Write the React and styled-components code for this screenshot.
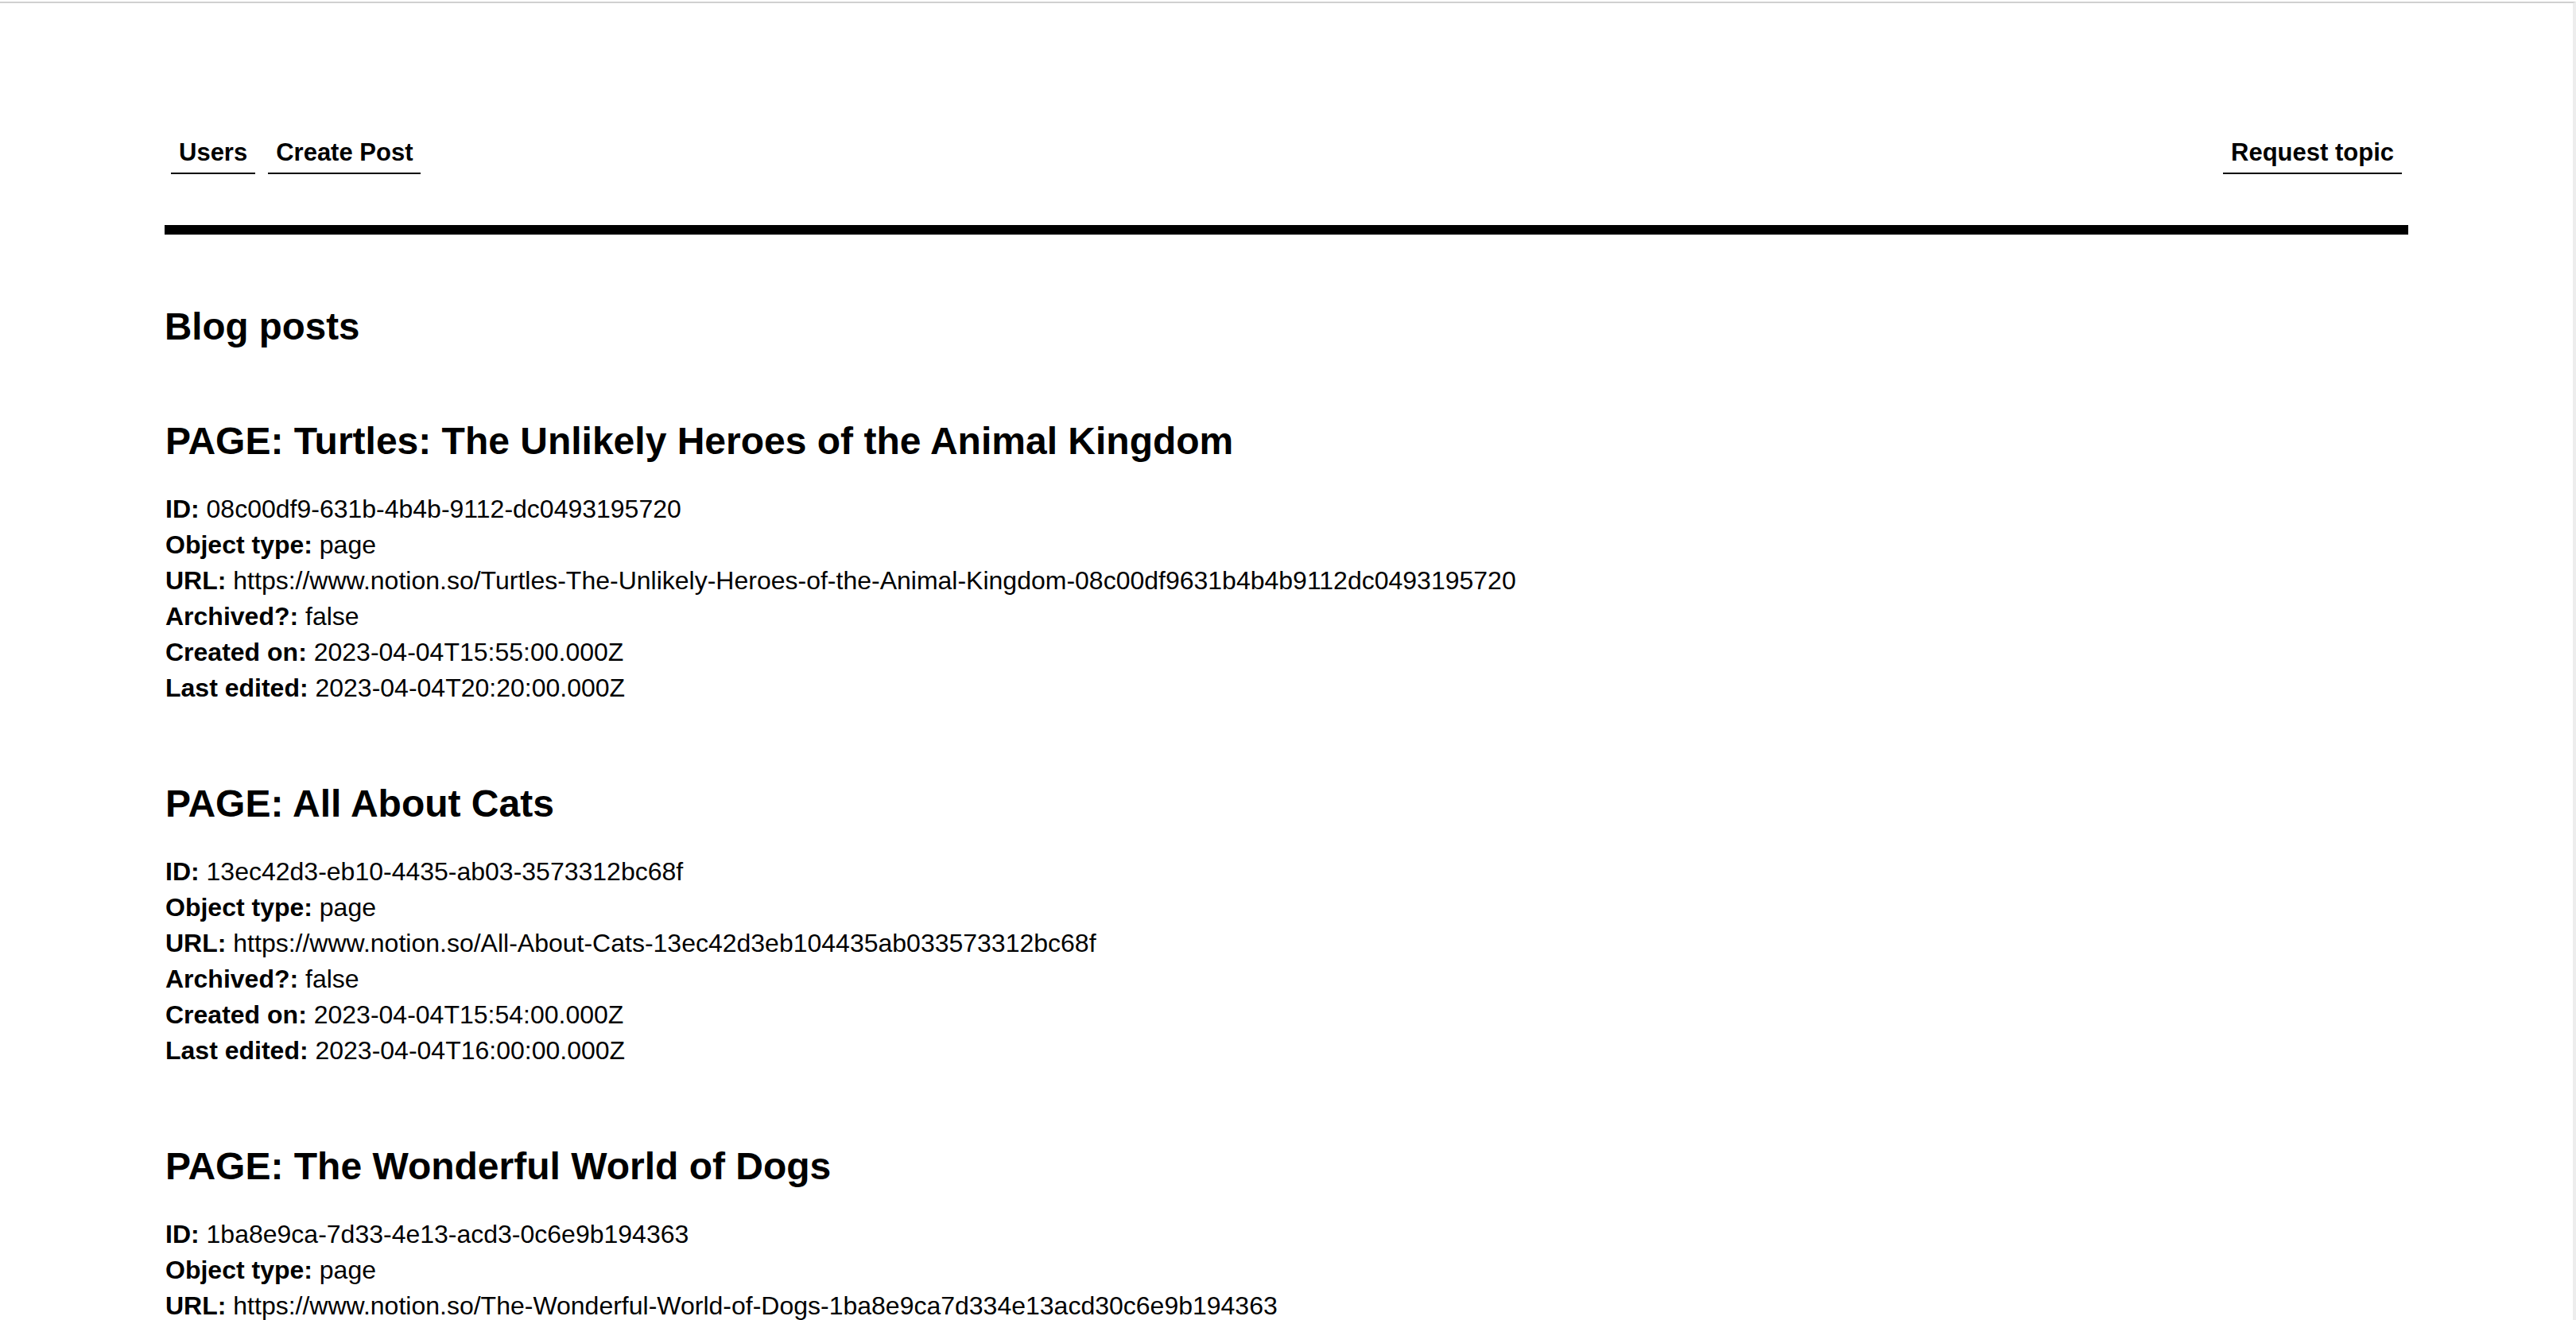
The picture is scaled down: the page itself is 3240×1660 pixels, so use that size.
import React from 'react';
import styled, { createGlobalStyle } from 'styled-components';

const GlobalStyle = createGlobalStyle`
  html, body {
    margin: 0;
    padding: 0;
    background: #ffffff;
  }
  body {
    font-family: "Liberation Sans", Arial, Helvetica, sans-serif;
    color: #000000;
  }
`

const Frame = styled.div`
  margin-top: 2px;
  border-top: 2px solid #d0d0d0;
  border-right: 4px solid #ededed;
  min-height: 100vh;
  box-sizing: border-box;
`

const Container = styled.div`
  width: 2822px;
  margin: 0 auto;
`

const Nav = styled.nav`
  display: flex;
  justify-content: space-between;
  align-items: flex-end;
  margin-top: 170px;
  padding: 0 8px;
`

const NavGroup = styled.div`
  display: flex;
  gap: 16px;
`

const NavLink = styled.a`
  display: block;
  font-size: 31px;
  font-weight: bold;
  line-height: 36px;
  color: #000000;
  text-decoration: none;
  padding: 0 10px 7px;
  border-bottom: 2px solid #000000;
  cursor: pointer;
`

const Rule = styled.hr`
  height: 12px;
  margin: 64px 0 0;
  border: none;
  background: #000000;
`

const Title = styled.h1`
  font-size: 47.5px;
  font-weight: bold;
  line-height: 55px;
  margin: 88px 0 0;
`

const Post = styled.section`
  margin-top: ${(props) => props.$first ? '89px' : '95px'};
`

const PostTitle = styled.h2`
  font-size: 48px;
  font-weight: bold;
  line-height: 55px;
  margin: 0 0 36px;
  padding-left: 1px;
`

const Field = styled.div`
  font-size: 32px;
  line-height: 45px;
  white-space: nowrap;
  padding-left: 1px;

  b {
    font-weight: bold;
  }
`

const posts = [
    {
        title: 'Turtles: The Unlikely Heroes of the Animal Kingdom',
        id: '08c00df9-631b-4b4b-9112-dc0493195720',
        url: 'https://www.notion.so/Turtles-The-Unlikely-Heroes-of-the-Animal-Kingdom-08c00df9631b4b4b9112dc0493195720',
        archived: 'false',
        created: '2023-04-04T15:55:00.000Z',
        edited: '2023-04-04T20:20:00.000Z',
    },
    {
        title: 'All About Cats',
        id: '13ec42d3-eb10-4435-ab03-3573312bc68f',
        url: 'https://www.notion.so/All-About-Cats-13ec42d3eb104435ab033573312bc68f',
        archived: 'false',
        created: '2023-04-04T15:54:00.000Z',
        edited: '2023-04-04T16:00:00.000Z',
    },
    {
        title: 'The Wonderful World of Dogs',
        id: '1ba8e9ca-7d33-4e13-acd3-0c6e9b194363',
        url: 'https://www.notion.so/The-Wonderful-World-of-Dogs-1ba8e9ca7d334e13acd30c6e9b194363',
        archived: 'false',
    },
]

const App = () => {
    return (
        <Frame>
            <GlobalStyle />
            <Container>

                {/* TOP NAV */}
                <Nav>
                    <NavGroup>
                        <NavLink>Users</NavLink>
                        <NavLink>Create Post</NavLink>
                    </NavGroup>
                    <NavLink>Request topic</NavLink>
                </Nav>
                <Rule />

                {/* POSTS */}
                <Title>Blog posts</Title>
                {posts.map((post, i) => (
                    <Post key={post.id} $first={i === 0}>
                        <PostTitle>PAGE: {post.title}</PostTitle>
                        <Field><b>ID:</b> {post.id}</Field>
                        <Field><b>Object type:</b> page</Field>
                        <Field><b>URL:</b> {post.url}</Field>
                        <Field><b>Archived?:</b> {post.archived}</Field>
                        {post.created && <Field><b>Created on:</b> {post.created}</Field>}
                        {post.edited && <Field><b>Last edited:</b> {post.edited}</Field>}
                    </Post>
                ))}

            </Container>
        </Frame>
    );
}

export default App;
